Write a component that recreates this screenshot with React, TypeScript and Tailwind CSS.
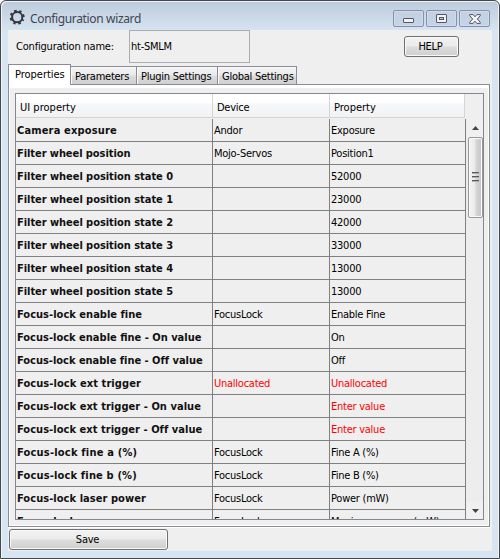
import React from "react";

type Row = { name: string; track: string; device?: string; value: string; alert?: boolean };

const rows: Row[] = [
  { name: "Camera exposure", track: "tracking-[0.16px]", device: "Andor", value: "Exposure" },
  { name: "Filter wheel position", track: "tracking-[-0.07px]", device: "Mojo-Servos", value: "Position1" },
  { name: "Filter wheel position state 0", track: "tracking-[-0.05px]", value: "52000" },
  { name: "Filter wheel position state 1", track: "tracking-[-0.05px]", value: "23000" },
  { name: "Filter wheel position state 2", track: "tracking-[-0.05px]", value: "42000" },
  { name: "Filter wheel position state 3", track: "tracking-[-0.05px]", value: "33000" },
  { name: "Filter wheel position state 4", track: "tracking-[-0.05px]", value: "13000" },
  { name: "Filter wheel position state 5", track: "tracking-[-0.05px]", value: "13000" },
  { name: "Focus-lock enable fine", track: "tracking-[0.02px]", device: "FocusLock", value: "Enable Fine" },
  { name: "Focus-lock enable fine - On value", track: "tracking-[0px]", value: "On" },
  { name: "Focus-lock enable fine - Off value", track: "tracking-[-0.02px]", value: "Off" },
  { name: "Focus-lock ext trigger", track: "tracking-[0.08px]", device: "Unallocated", value: "Unallocated", alert: true },
  { name: "Focus-lock ext trigger - On value", track: "tracking-[0.05px]", value: "Enter value", alert: true },
  { name: "Focus-lock ext trigger - Off value", track: "tracking-[0.04px]", value: "Enter value", alert: true },
  { name: "Focus-lock fine a (%)", track: "tracking-[0.2px]", device: "FocusLock", value: "Fine A (%)" },
  { name: "Focus-lock fine b (%)", track: "tracking-[0.16px]", device: "FocusLock", value: "Fine B (%)" },
  { name: "Focus-lock laser power", track: "tracking-[0.05px]", device: "FocusLock", value: "Power (mW)" },
  { name: "Focus-lock max power", track: "tracking-[0.05px]", device: "FocusLock", value: "Maximum power (mW)" },
];

function Gear() {
  return (
    <svg width="16" height="16" viewBox="0 0 16 16" fill="none" stroke="#33373a">
      <circle cx="8.2" cy="8.2" r="5.1" strokeWidth="2" />
      <circle
        cx="8.2"
        cy="8.2"
        r="6.5"
        strokeWidth="2"
        strokeDasharray="2.5 2.605"
        strokeDashoffset="1.25"
        transform="rotate(22.5 8.2 8.2)"
      />
    </svg>
  );
}

function WindowButton({ children }: { children: React.ReactNode }) {
  return (
    <div className="flex h-[17px] w-[31px] items-center justify-center rounded-[2px] border border-[#8591ae] bg-gradient-to-b from-[#c3d1e1] to-[#c5d5e6] shadow-[inset_0_0_0_1px_#cfdceb]">
      {children}
    </div>
  );
}

function Button({ className, children }: { className: string; children: React.ReactNode }) {
  return (
    <div
      className={`flex h-[21px] items-center justify-center rounded-[3px] border border-[#707070] bg-[linear-gradient(#f2f2f2_0%,#ebebeb_48%,#dddddd_52%,#cfcfcf_100%)] pt-px shadow-[inset_0_0_0_1px_#f8f8f8] ${className}`}
    >
      {children}
    </div>
  );
}

function Tab({ className, children }: { className: string; children: string }) {
  return (
    <div
      className={`flex h-[18px] items-center border-t border-r border-[#898c95] bg-[linear-gradient(#f2f2f2_0%,#ebebeb_48%,#dddddd_52%,#cfcfcf_100%)] pt-[2px] pl-[4px] shadow-[inset_1px_1px_0_#fafafa] ${className}`}
    >
      {children}
    </div>
  );
}

function HeaderCell({ className, children }: { className: string; children: string }) {
  return (
    <div
      className={`flex h-[24px] items-center border-r border-b border-[#d5d5d5] bg-[linear-gradient(#ffffff_0%,#ffffff_38%,#f7f8fa_42%,#f1f2f4_100%)] pt-[5px] pl-[4px] ${className}`}
    >
      {children}
    </div>
  );
}

function Grip() {
  return <div className="h-[2px] w-[7px] border-b border-[#b0b0b0] bg-[#5a5a5a]" />;
}

export default function App() {
  return (
    <div className="h-[559px] w-[500px] overflow-hidden bg-white font-['DejaVu_Sans_Condensed','DejaVu_Sans',sans-serif] text-[11px] leading-[14px] tracking-[-0.25px] whitespace-nowrap text-black [font-stretch:condensed]">
      <div className="flex h-[559px] flex-col rounded-t-[6px] border border-[#47474b] bg-[linear-gradient(#bccbdb_0px,#d7e4f2_30px)] px-[7px] shadow-[inset_1px_1px_0_#eef4fa,inset_-1px_0_0_#eef4fa]">
        <header className="flex h-[29px] shrink-0 items-start pr-[2px]">
          <div className="mt-[8px] ml-[1px]"><Gear /></div>
          <div className="mt-[11px] ml-[5px] font-['Noto_Sans',sans-serif] text-[12px] tracking-[-0.35px] text-[#3e4650]">Configuration wizard</div>
          <div className="mt-[9px] ml-auto flex gap-[2px]">
            <WindowButton>
              <div className="mt-[4px] h-[5px] w-[11px] rounded-[1px] border border-[#535666] bg-[#f2f2f2]" />
            </WindowButton>
            <WindowButton>
              <div className="flex h-[9px] w-[11px] items-center justify-center rounded-[1px] border border-[#535666] bg-[#f2f2f2]">
                <div className="h-[3px] w-[5px] border border-[#535666] bg-[#b9c8da]" />
              </div>
            </WindowButton>
            <WindowButton>
              <svg width="12" height="10" viewBox="0 0 12 10" strokeLinejoin="round">
                <path d="M.7.6h3.4L6 2.8 7.9.6h3.4v1L8.3 5l3 3.4v1H7.9L6 7.2 4.1 9.4H.7v-1l3-3.4-3-3.4z" fill="#f4f4f4" stroke="#535666" />
              </svg>
            </WindowButton>
          </div>
        </header>

        <main className="flex h-[521px] flex-col bg-[#efefef]">
          <section className="flex h-[34px] shrink-0 items-start">
            <div className="mt-[10px] ml-[8px] w-[113px] tracking-[-0.2px]">Configuration name:</div>
            <div className="h-[33px] w-[121px] border border-[#abadb3] pt-[9px] pl-px">ht-SMLM</div>
            <Button className="mt-[6px] ml-[154px] w-[55px] pr-[2px]">HELP</Button>
          </section>

          <nav className="z-10 flex h-[21px] shrink-0 items-end">
            <div className="h-[21px] w-[63px] border-x border-t border-[#898c95] bg-white pt-[3px] pl-[6px] tracking-[-0.03px]">Properties</div>
            <div className="flex h-[19px]">
              <Tab className="w-[66px]">Parameters</Tab>
              <Tab className="w-[81px]">Plugin Settings</Tab>
              <Tab className="w-[79px]">Global Settings</Tab>
            </div>
          </nav>

          <section className="-mt-px mr-[2px] h-[443px] shrink-0 border border-[#898c95] bg-white px-px pt-[3px] pb-px shadow-[0_1px_0_#fff]">
            <div className="h-[437px] bg-[#efefef] pt-[5px] pl-[5px]">
              <div className="flex h-[427px] w-[469px] flex-col overflow-hidden border border-[#828790]">
                <div className="flex h-[25px] shrink-0">
                  <HeaderCell className="w-[197px] tracking-[0.02px]">UI property</HeaderCell>
                  <HeaderCell className="w-[117px]">Device</HeaderCell>
                  <HeaderCell className="w-[135px] tracking-[0px]">Property</HeaderCell>
                </div>
                <div className="flex min-h-0 flex-1">
                  <div className="w-[450px] overflow-hidden">
                    {rows.map((r) => (
                      <div key={r.name} className={`grid h-[23px] grid-cols-[197px_117px_136px] ${r.alert ? "text-[#ff0000]" : ""}`}>
                        <div className={`border-r border-b border-[#808080] pt-[5px] pl-px font-bold text-[#111] ${r.track}`}>{r.name}</div>
                        <div className="border-r border-b border-[#808080] pt-[5px] pl-px">{r.device}</div>
                        <div className="border-r border-b border-[#808080] pt-[5px] pl-px">{r.value}</div>
                      </div>
                    ))}
                  </div>
                  <div className="flex w-[17px] flex-col items-center bg-[#ededed] pl-px">
                    <div className="flex h-[18px] w-full items-center justify-center bg-[#f0f0f0]">
                      <svg width="7" height="4" viewBox="0 0 7 4"><path d="M0 4 3.5 0 7 4z" fill="#444" /></svg>
                    </div>
                    <div className="flex h-[81px] w-[15px] flex-col items-center justify-center gap-[2px] rounded-[2px] border border-[#979797] bg-[linear-gradient(90deg,#f4f4f4_0%,#e9e9eb_48%,#d6d6d8_52%,#c5c5c7_100%)] pb-px shadow-[inset_0_0_0_1px_#fafafa]">
                      <Grip />
                      <Grip />
                      <Grip />
                    </div>
                    <div className="mt-auto flex h-[17px] w-full items-center justify-center bg-[#f0f0f0]">
                      <svg width="7" height="4" viewBox="0 0 7 4"><path d="M0 0 3.5 4 7 0z" fill="#444" /></svg>
                    </div>
                  </div>
                </div>
              </div>
            </div>
          </section>

          <footer className="pt-[2px] pl-px">
            <Button className="w-[159px] pr-[2px]">Save</Button>
          </footer>
        </main>
      </div>
    </div>
  );
}
